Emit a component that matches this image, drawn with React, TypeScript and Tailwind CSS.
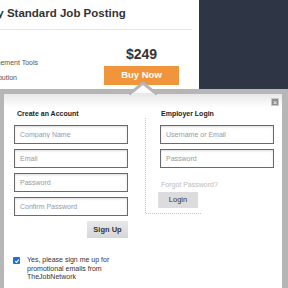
import React from 'react';

function Field({ placeholder, type = 'text' }: { placeholder: string; type?: string }) {
  return (
    <input
      type={type}
      placeholder={placeholder}
      className="h-[19px] w-[114px] border border-[#6a6a6a] bg-white pl-[5px] text-[7px] text-[#333] shadow-[inset_0_1px_2px_rgba(0,0,0,0.15)] outline-none placeholder:text-[#999999]"
    />
  );
}

export default function App() {
  return (
    <div className="relative h-[288px] w-[288px] overflow-hidden bg-white font-['Liberation_Sans',Arial,sans-serif]">
      <div className="flex h-[89px]">
        {/* page behind the popup */}
        <div className="w-[199px] overflow-hidden">
          <div className="h-[30px] w-[192px] border-b border-[#e6e6e6] pt-[6px]">
            <h1 className="ml-[-18px] whitespace-nowrap text-[11.5px] font-bold leading-[15px] text-[#333]">
              Buy Standard Job Posting
            </h1>
          </div>
          <div className="flex justify-between">
            <div className="mt-[25px] text-[7px] leading-[15px] text-[#555555]">
              <div className="ml-[-21px] whitespace-nowrap">Management Tools</div>
              <div className="ml-[-18px] whitespace-nowrap">Distribution</div>
            </div>
            <div className="mr-[20px] mt-[16px] flex w-[75px] flex-col items-center">
              <div className="text-[14px] font-bold leading-[16px] text-[#333]">$249</div>
              <button className="mt-[4px] h-[19px] w-[75px] bg-[#f0953b] text-[9.5px] font-bold text-white">
                Buy Now
              </button>
            </div>
          </div>
        </div>
        <div className="flex-1 bg-[#2e3544]" />
      </div>

      {/* login / signup popup */}
      <div className="absolute left-[-1px] top-[89px] h-[210px] w-[289px] border-[5px] border-r-[6px] border-[#b6b6b6] bg-[linear-gradient(#e8e8e8,#ffffff_14px)]">
        <button className="absolute right-[3px] top-[4px] flex h-[8px] w-[8px] items-center justify-center border border-[#c8c8c8] bg-[#8e8e8e] text-[7px] leading-none text-white">
          ×
        </button>
        <div className="flex pl-[10px] pt-[15px]">
          <div className="flex w-[114px] flex-col">
            <h2 className="pl-[3px] text-[7px] font-bold leading-[10px] text-[#222]">Create an Account</h2>
            <div className="mt-[6px] flex flex-col gap-[5px]">
              <Field placeholder="Company Name" />
              <Field placeholder="Email" />
              <Field placeholder="Password" type="password" />
              <Field placeholder="Confirm Password" type="password" />
              <button className="h-[17px] w-[41px] self-end bg-[linear-gradient(#e8e8e8,#d6d6d6)] text-[7.5px] font-bold text-[#333]">
                Sign Up
              </button>
            </div>
            <label className="ml-[-1px] mt-[18px] flex gap-[7px]">
              <span className="mt-[1px] flex h-[7px] w-[7px] shrink-0 items-center justify-center rounded-[1px] bg-[#1b6fe0]">
                <svg viewBox="0 0 10 10" className="h-[6px] w-[6px]">
                  <path d="M2 5.2 4.2 7.4 8.2 2.6" fill="none" stroke="white" strokeWidth="1.8" />
                </svg>
              </span>
              <span className="text-[7px] leading-[8.5px] text-[#333]">
                Yes, please sign me up for
                <br />
                promotional emails from
                <br />
                TheJobNetwork
              </span>
            </label>
          </div>

          <div className="ml-[17px] mt-[9px] h-[95px] w-0 border-l border-dotted border-[#c4c4c4]" />

          <div className="ml-[12px] flex flex-col">
            <h2 className="pl-[3px] text-[7px] font-bold leading-[10px] text-[#222]">Employer Login</h2>
            <div className="ml-[2px] mt-[6px] flex flex-col gap-[5px]">
              <Field placeholder="Username or Email" />
              <Field placeholder="Password" type="password" />
            </div>
            <span className="ml-[3px] mt-[12px] text-[7px] leading-[10px] text-[#bbbbbb]">Forgot Password?</span>
            <button className="mt-[2px] h-[16px] w-[40px] bg-[#dcdcdc] text-[7.5px] text-[#333]">Login</button>
            <div className="ml-[-12px] mt-[5px] w-[55px] border-t border-dotted border-[#c4c4c4]" />
          </div>
        </div>
      </div>

      {/* caret pointing at Buy Now */}
      <svg className="absolute left-[129px] top-[82px]" width="28" height="13" viewBox="0 0 28 13">
        <path d="M0 12.5 14 1 28 12.5" fill="#ffffff" stroke="#b6b6b6" strokeWidth="3" />
        <rect x="3" y="11" width="22" height="2" fill="#eaeaea" />
      </svg>
    </div>
  );
}
